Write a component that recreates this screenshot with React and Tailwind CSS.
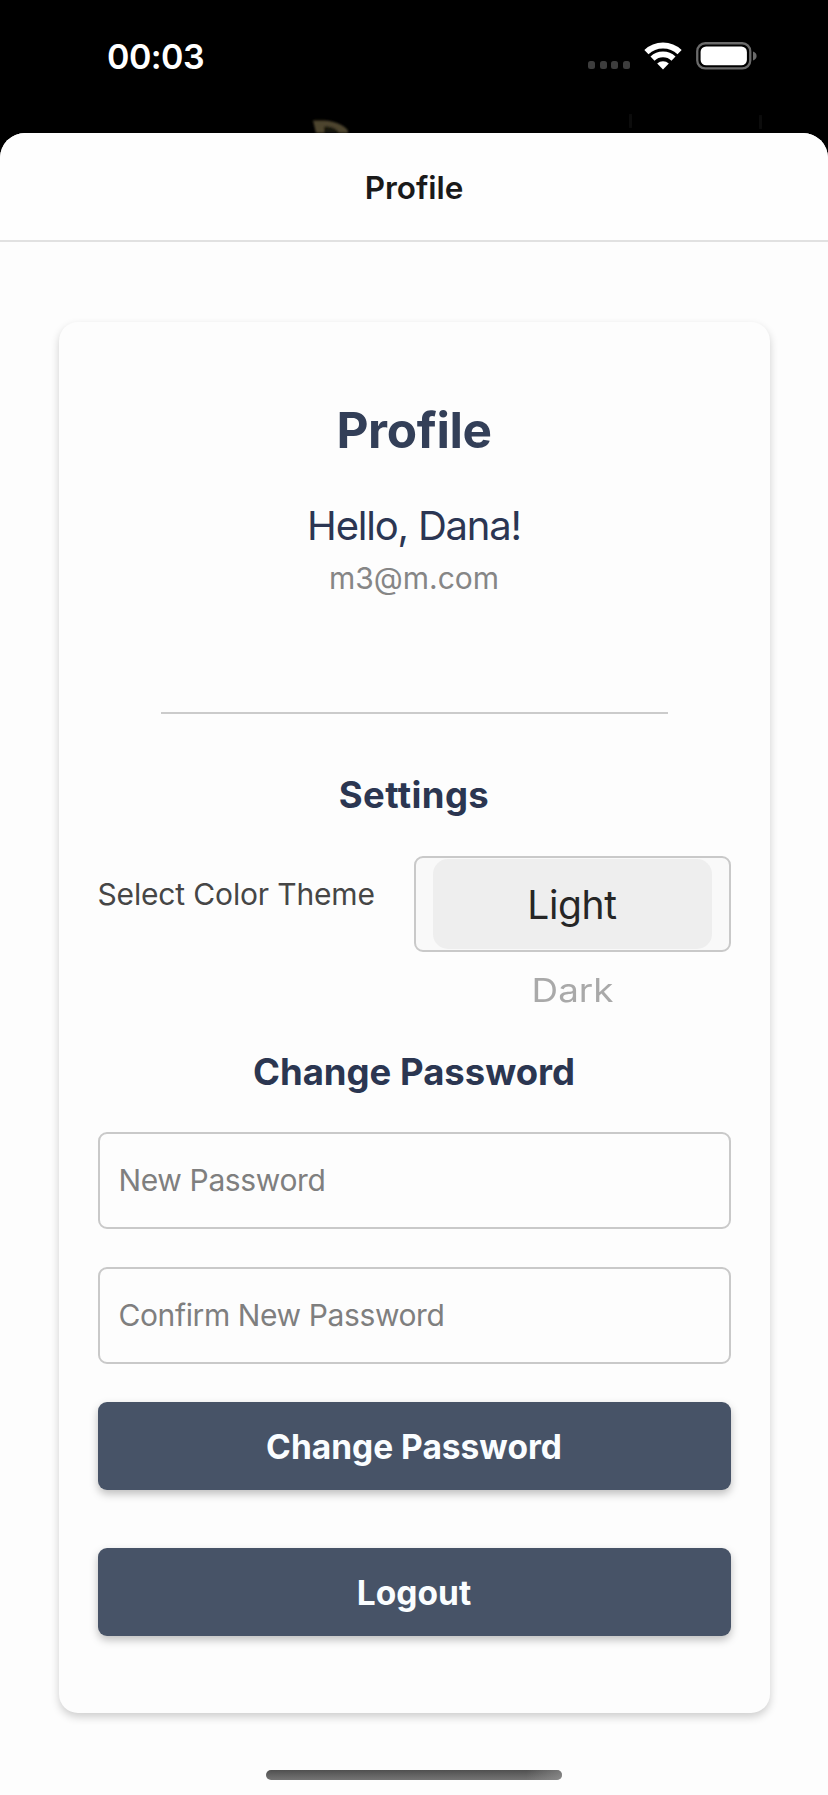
import React from "react";

function WifiIcon() {
  return (
    <svg width="38" height="28" viewBox="-19 -27.5 38 28" fill="none" aria-hidden="true">
      <path d="M-16.6 -17.4A24 24 0 0 1 16.6 -17.4" stroke="#fff" strokeWidth="6" />
      <path d="M-10.5 -10.9A15.1 15.1 0 0 1 10.5 -10.9" stroke="#fff" strokeWidth="5.8" />
      <path d="M0 0L-5.8 -6A8.3 8.3 0 0 1 5.8 -6Z" fill="#fff" />
    </svg>
  );
}

function BatteryIcon() {
  return (
    <svg width="61" height="28" viewBox="0 0 61 28" fill="none" aria-hidden="true">
      <rect x="1.25" y="1.25" width="53" height="25.2" rx="8" stroke="#6b6b6b" strokeWidth="2.3" />
      <rect x="4.6" y="4.5" width="46.3" height="18.8" rx="5.5" fill="#fff" />
      <path d="M57 9.6C59.3 10.3 60.6 12 60.6 14S59.3 17.7 57 18.4Z" fill="#6b6b6b" />
    </svg>
  );
}

function SignalDots() {
  return (
    <div className="flex gap-[4.5px] pt-[19px]">
      {[0, 1, 2, 3].map((i) => (
        <span key={i} className="h-[7.5px] w-[7px] rounded-[2.5px] bg-[#3d3d3d]" />
      ))}
    </div>
  );
}

function BackdropHints() {
  return (
    <svg className="absolute left-0 top-[110px]" width="828" height="24" aria-hidden="true">
      <defs>
        <filter id="soft"><feGaussianBlur stdDeviation="1.3" /></filter>
      </defs>
      <g filter="url(#soft)">
        <path d="M313 10.5H324C334 11 345 15 348 21V23H339C336 18 330 16 324 17V23H316Z" fill="#4e452f" />
        <path d="M324 17C330 16 336 18 339 23H324Z" fill="#14140e" />
        <rect x="629" y="4" width="3" height="14" fill="#080808" />
        <rect x="759" y="5" width="3" height="14" fill="#0f0f0f" />
      </g>
    </svg>
  );
}

function Field({ placeholder, tracking }) {
  return (
    <input
      placeholder={placeholder}
      className={`block h-[97px] w-full rounded-[9px] border-2 border-[#c9c9c9] bg-[#fdfdfd] pb-[2px] pl-[19px] pr-[18px] text-[30px] outline-none placeholder:text-[#7f7f7f] placeholder:opacity-100 ${tracking}`}
    />
  );
}

function Button({ children }) {
  return (
    <button className="block h-[88px] w-full rounded-[9px] bg-[#475367] text-[33.5px] font-bold leading-[90px] text-[#fafdff] shadow-[0_4px_8px_rgba(0,0,0,0.25)]">
      {children}
    </button>
  );
}

export default function App() {
  return (
    <div className="relative flex h-[1795px] w-[828px] flex-col overflow-hidden bg-black font-['Inter',sans-serif]">
      <BackdropHints />
      <div className="flex h-[133px] shrink-0 items-start pl-[107px]">
        <span className="mt-[36px] w-[481px] text-[34px] font-semibold leading-[41px] tracking-[-0.0156em] text-white">00:03</span>
        <div className="mt-[42px] flex items-start">
          <SignalDots />
          <div className="ml-[14px]"><WifiIcon /></div>
          <div className="ml-[14px]"><BatteryIcon /></div>
        </div>
      </div>

      <div className="relative flex flex-1 flex-col items-center overflow-hidden rounded-t-[25px] bg-[#fdfdfd]">
        <header className="h-[109px] w-full border-b-2 border-[#e1e1e1] bg-[#fefefe] text-center text-[31.5px] font-semibold leading-[109px] tracking-[-0.002em] text-[#1a1a1a]">
          Profile
        </header>

        <main className="mt-[80px] flex h-[1391px] w-[711px] shrink-0 flex-col rounded-[19px] bg-[#fdfdfd] px-[39px] pt-[78px] text-center shadow-[0_4px_9px_rgba(0,0,0,0.19)]">
          <h1 className="text-[49.5px] font-bold leading-[61px] tracking-[-0.0078em] text-[#333f58]">Profile</h1>
          <p className="mt-[39px] text-[40px] leading-[51px] tracking-[-0.0298em] text-[#2b3653]">Hello, Dana!</p>
          <p className="mt-[8px] text-[30px] leading-[38px] text-[#868686]">m3@m.com</p>
          <div className="mt-[115px] h-[2px] w-[507px] shrink-0 self-center bg-[#cbcbcb]" />

          <h2 className="mt-[59px] text-[36.5px] font-bold leading-[44px] tracking-[0.0107em] text-[#2b3651]">Settings</h2>
          <div className="mt-[39px] flex justify-between">
            <span className="text-[30px] leading-[77px] tracking-[-0.0052em] text-[#464646]">Select Color Theme</span>
            <div className="w-[317px]">
              <div className="h-[96px] rounded-[9px] border-2 border-[#c9c9c9] bg-[#f9f9f9] px-[17px] py-px">
                <div className="h-[90px] rounded-[15px] bg-[#eeeeee] text-[39px] leading-[91px] tracking-[-0.0095em] text-[#262626]">Light</div>
              </div>
              <div className="mt-[18px] scale-x-[1.115] text-[33px] leading-[40px] text-[#a9a9a9]">Dark</div>
            </div>
          </div>

          <h2 className="mt-[40px] text-[36.5px] font-bold leading-[45px] tracking-[-0.0005em] text-[#2b3651]">Change Password</h2>
          <div className="mt-[37px] flex flex-col gap-[38px]">
            <Field placeholder="New Password" tracking="tracking-[-0.0121em]" />
            <Field placeholder="Confirm New Password" tracking="tracking-[-0.0131em]" />
            <Button>Change Password</Button>
          </div>
          <div className="mt-[58px]">
            <Button>Logout</Button>
          </div>
        </main>

        <div className="mt-[57px] h-[10px] w-[296px] shrink-0 rounded-full bg-[linear-gradient(180deg,#505050,#747474)]">
          <div className="h-full rounded-full bg-[linear-gradient(90deg,transparent_88%,rgba(160,160,160,0.5)_100%)]" />
        </div>
      </div>
    </div>
  );
}
